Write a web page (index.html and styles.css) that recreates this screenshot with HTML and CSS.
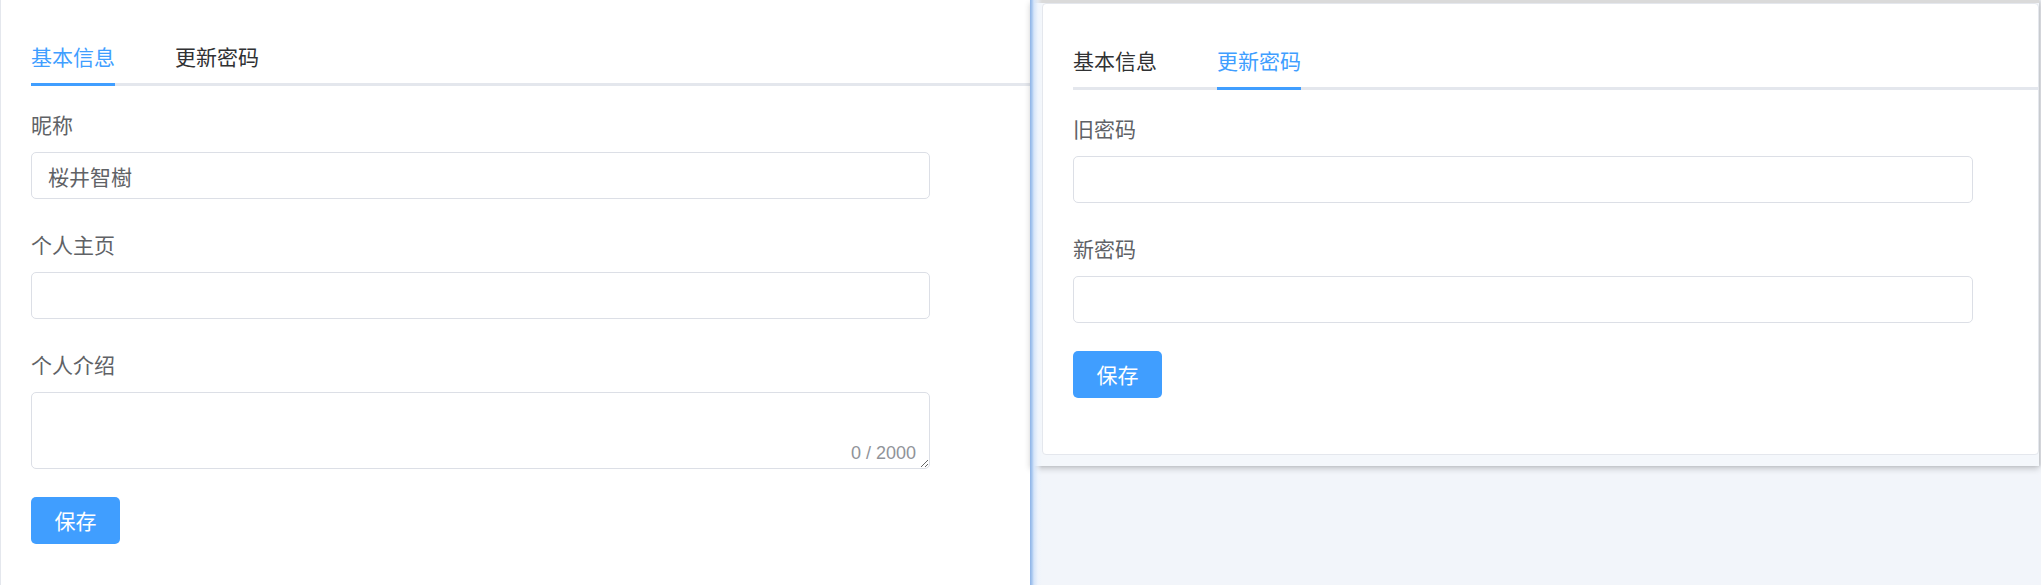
FILE: index.html
```html
<!DOCTYPE html>
<html lang="zh-CN">
<head>
<meta charset="utf-8">
<title>设置</title>
<link rel="stylesheet" href="styles.css">
</head>
<body>
<div class="page">
  <section class="panel">
    <div class="tabs">
      <div class="tab is-active">基本信息</div>
      <div class="tab">更新密码</div>
    </div>
    <form class="form">
      <div class="form-item">
        <label class="form-label">昵称</label>
        <input class="input" type="text" value="桜井智樹">
      </div>
      <div class="form-item">
        <label class="form-label">个人主页</label>
        <input class="input" type="text" value="">
      </div>
      <div class="form-item form-item--last">
        <label class="form-label">个人介绍</label>
        <div class="textarea-wrap">
          <textarea class="textarea"></textarea>
          <span class="count">0 / 2000</span>
        </div>
      </div>
      <button class="btn" type="button">保存</button>
    </form>
  </section>

  <section class="stage">
    <div class="window">
      <div class="card">
        <div class="tabs">
          <div class="tab">基本信息</div>
          <div class="tab is-active">更新密码</div>
        </div>
        <form class="form">
          <div class="form-item">
            <label class="form-label">旧密码</label>
            <input class="input input--wide" type="password" value="">
          </div>
          <div class="form-item form-item--last">
            <label class="form-label">新密码</label>
            <input class="input input--wide" type="password" value="">
          </div>
          <button class="btn" type="button">保存</button>
        </form>
      </div>
    </div>
  </section>
</div>
</body>
</html>
```

FILE: styles.css
```css
* { box-sizing: border-box; }

html, body {
  margin: 0;
  padding: 0;
  background: #ffffff;
  font-family: "Noto Sans CJK SC", "Liberation Sans", sans-serif;
}

.page {
  display: flex;
  width: 2041px;
  height: 585px;
  overflow: hidden;
}

/* ---------- left panel ---------- */
.panel {
  flex: 0 0 1030px;
  height: 585px;
  padding: 33px 0 0 30px;
  border-left: 1px solid #e4e7ed;
  background: #ffffff;
}

/* ---------- tabs ---------- */
.tabs {
  display: flex;
  height: 53px;
  border-bottom: 3px solid #e4e7ed;
}

.tab {
  position: relative;
  padding: 0 30px;
  height: 50px;
  line-height: 47px;
  font-size: 21px;
  color: #303133;
  white-space: nowrap;
}

.tab:first-child { padding-left: 0; }

.tab.is-active { color: #409eff; }

.tab.is-active::after {
  content: "";
  position: absolute;
  left: 30px;
  right: 30px;
  bottom: -3px;
  height: 3px;
  background: #409eff;
}

.tab.is-active:first-child::after { left: 0; }

/* ---------- form ---------- */
.form {
  display: flex;
  flex-direction: column;
  align-items: flex-start;
  padding-top: 23px;
}

.form-item {
  display: flex;
  flex-direction: column;
  margin-bottom: 30px;
}

.form-item--last { margin-bottom: 28px; }

.form-label {
  height: 30px;
  line-height: 30px;
  margin-bottom: 13px;
  font-size: 21px;
  color: #606266;
}

.input {
  width: 899px;
  height: 47px;
  padding: 0 16px;
  border: 1px solid #dcdfe6;
  border-radius: 5px;
  background: #ffffff;
  font-family: "Noto Sans CJK SC", "Liberation Sans", sans-serif;
  font-size: 21px;
  color: #606266;
  outline: none;
}

.input--wide { width: 900px; }

.textarea-wrap {
  position: relative;
  width: 899px;
  height: 77px;
}

.textarea {
  display: block;
  width: 100%;
  height: 100%;
  padding: 6px 16px;
  border: 1px solid #dcdfe6;
  border-radius: 5px;
  font-family: "Noto Sans CJK SC", "Liberation Sans", sans-serif;
  font-size: 21px;
  color: #606266;
  outline: none;
  resize: vertical;
}

.count {
  position: absolute;
  right: 14px;
  bottom: 6px;
  font-family: "Liberation Sans", Arial, sans-serif;
  font-size: 18px;
  line-height: 20px;
  color: #909399;
  background: #ffffff;
}

.btn {
  width: 89px;
  height: 47px;
  padding: 0;
  border: 0;
  border-radius: 5px;
  background: #409eff;
  color: #ffffff;
  font-family: "Noto Sans CJK SC", "Liberation Sans", sans-serif;
  font-size: 21px;
  line-height: 47px;
}

/* ---------- right stage ---------- */
.stage {
  position: relative;
  flex: 1 1 auto;
  height: 585px;
  background: #f2f5fa;
}

.stage::before {
  content: "";
  position: absolute;
  left: 0;
  top: 0;
  bottom: 0;
  width: 12px;
  z-index: 2;
  background: linear-gradient(to right, #8db3e6 0, #a9c8f0 2px, #d6e5f9 4px, rgba(236, 243, 253, 0.6) 8px, rgba(243, 246, 251, 0) 12px);
}

.window {
  width: 1009px;
  height: 466px;
  padding: 0 0 0 12px;
  background: #f4f7fb;
  border-top: 3px solid #dadada;
  box-shadow: 0 3px 6px rgba(0, 0, 0, 0.18), 2px 0 3px rgba(0, 0, 0, 0.12);
}

.card {
  width: 997px;
  height: 452px;
  padding: 33px 0 0 30px;
  border: 1px solid #e4e7ed;
  border-radius: 4px;
  background: #ffffff;
}
```
